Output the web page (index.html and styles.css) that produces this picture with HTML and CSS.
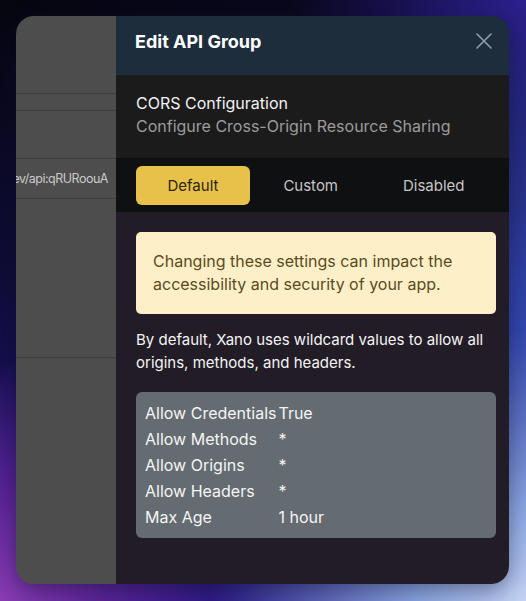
FILE: index.html
```html
<!DOCTYPE html>
<html lang="en">
<head>
<meta charset="utf-8">
<title>Edit API Group</title>
<link rel="stylesheet" href="styles.css">
</head>
<body>
<div class="window">
  <div class="backdrop">
    <div class="bd-top"></div>
    <div class="bd-row r1"></div>
    <div class="bd-row r2"></div>
    <div class="bd-row r3"><span class="bd-url">ev/api:qRURoouA</span></div>
    <div class="bd-row r4"></div>
    <div class="bd-rest"></div>
  </div>
  <div class="panel">
    <header class="panel-head">
      <h1 class="panel-title">Edit API Group</h1>
      <button class="close" aria-label="Close">
        <svg width="16" height="16" viewBox="0 0 16 16" fill="none" stroke="currentColor" stroke-width="1.6" stroke-linecap="round"><path d="M1 1L15 15M15 1L1 15"/></svg>
      </button>
    </header>
    <section class="intro">
      <div class="intro-title">CORS Configuration</div>
      <div class="intro-sub">Configure Cross-Origin Resource Sharing</div>
    </section>
    <div class="tabs">
      <button class="tab active">Default</button>
      <button class="tab">Custom</button>
      <button class="tab">Disabled</button>
    </div>
    <div class="content">
      <div class="warning">Changing these settings can impact the accessibility and security of your app.</div>
      <p class="desc">By default, Xano uses wildcard values to allow all origins, methods, and headers.</p>
      <div class="settings">
        <table>
          <tr><td class="k">Allow Credentials</td><td class="v">True</td></tr>
          <tr><td class="k">Allow Methods</td><td class="v">*</td></tr>
          <tr><td class="k">Allow Origins</td><td class="v">*</td></tr>
          <tr><td class="k">Allow Headers</td><td class="v">*</td></tr>
          <tr><td class="k">Max Age</td><td class="v">1 hour</td></tr>
        </table>
      </div>
    </div>
  </div>
</div>
</body>
</html>
```
FILE: styles.css
```css
* { box-sizing: border-box; }
html, body { margin: 0; padding: 0; }
body {
  width: 526px;
  height: 601px;
  overflow: hidden;
  font-family: Inter, "Noto Sans", sans-serif;
  background:
    radial-gradient(ellipse 60% 45% at 100% 100%, #c4d3f5 0%, #8aa6e2 35%, rgba(80,100,200,0) 100%),
    radial-gradient(ellipse 45% 40% at 0% 100%, #8a3cb4 0%, #5a2498 45%, rgba(60,20,140,0) 100%),
    radial-gradient(ellipse 55% 60% at 100% 55%, #3448b0 0%, rgba(40,40,160,0) 100%),
    radial-gradient(ellipse 45% 35% at 100% 0%, #2a1b8a 0%, rgba(40,26,130,0) 100%),
    linear-gradient(165deg, #06060f 0%, #0f0c35 35%, #1e1470 70%, #2c1a8c 100%);
  padding: 16px 17px 17px 16px;
}
.window {
  width: 493px;
  height: 568px;
  border-radius: 18px;
  overflow: hidden;
  display: grid;
  grid-template-columns: 100px 1fr;
  box-shadow: 0 6px 22px rgba(10, 10, 40, 0.45);
}
.backdrop {
  background: #4d4d4d;
  display: flex;
  flex-direction: column;
  min-width: 0;
}
.bd-top { height: 77px; }
.bd-row { border-top: 1px solid #3f3f3f; }
.r1 { height: 17px; }
.r2 { height: 48px; }
.r3 {
  height: 40px;
  display: flex;
  align-items: center;
  justify-content: flex-end;
  padding-right: 8px;
  white-space: nowrap;
}
.bd-url { font-size: 12.5px; letter-spacing: -0.5px; color: #cacaca; flex-shrink: 0; }
.r4 { height: 160px; border-bottom: 1px solid #3f3f3f; }
.bd-rest { flex: 1; }

.panel {
  background: #221c27;
  display: flex;
  flex-direction: column;
  min-width: 0;
}
.panel-head {
  height: 59px;
  background: #1d2d3c;
  display: flex;
  justify-content: space-between;
  align-items: flex-start;
  padding: 14px 17px 0 19px;
}
.panel-title {
  margin: 0;
  font-size: 18px;
  line-height: 24px;
  font-weight: 700;
  color: #ffffff;
}
.close {
  margin-top: 3px;
  padding: 0;
  border: 0;
  background: none;
  color: #8e9ea9;
  width: 16px;
  height: 16px;
  display: block;
}
.close svg { display: block; }
.intro {
  height: 83px;
  background: #1b1b1b;
  padding: 17px 20px 0 20px;
  font-size: 16px;
  line-height: 23px;
}
.intro-title { color: #f2f2f2; }
.intro-sub { color: #9b9b9b; }
.tabs {
  height: 54px;
  background: #0f1011;
  display: flex;
  gap: 2px;
  padding: 8px 13px 7px 20px;
}
.tab {
  flex: 1 1 auto;
  border: 0;
  border-radius: 6px;
  background: transparent;
  color: #c6c6c6;
  font-family: inherit;
  font-size: 15px;
  padding: 0 8px;
  height: 39px;
}
.tab.active {
  background: #e8c14b;
  color: #2b2412;
}
.content {
  flex: 1;
  padding: 20px 13px 0 20px;
}
.warning {
  background: #fdf0c8;
  color: #5b4a1d;
  border-radius: 5px;
  padding: 18px 17px;
  font-size: 16px;
  line-height: 23px;
}
.desc {
  margin: 15px 0 18px;
  color: #f4f4f4;
  font-size: 15px;
  line-height: 22.5px;
}
.settings {
  background: #646b71;
  border-radius: 6px;
  padding: 8px 9px;
}
.settings table {
  border-collapse: collapse;
  color: #f5f5f5;
  font-size: 16px;
  line-height: 26px;
}
.settings td { padding: 0; vertical-align: middle; white-space: nowrap; }
.settings td.k { padding-right: 2px; }
```
